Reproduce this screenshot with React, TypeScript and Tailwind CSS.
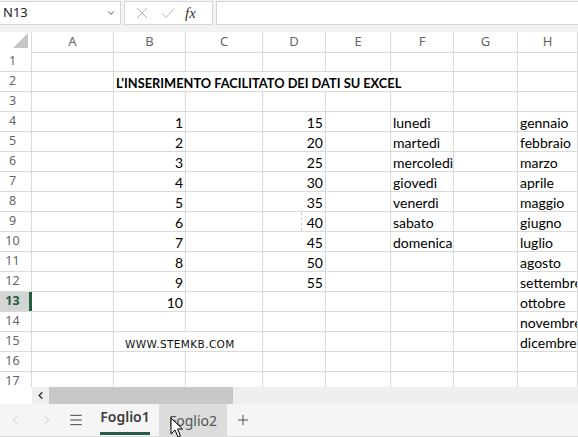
import { ChevronLeft, ChevronRight, Menu, Plus, ChevronDown } from "lucide-react";

const cols = ["A", "B", "C", "D", "E", "F", "G", "H"];

const days = ["lunedì", "martedì", "mercoledì", "giovedì", "venerdì", "sabato", "domenica"];
const months = [
  "gennaio",
  "febbraio",
  "marzo",
  "aprile",
  "maggio",
  "giugno",
  "luglio",
  "agosto",
  "settembre",
  "ottobre",
  "novembre",
  "dicembre",
];

const gridCols = "grid grid-cols-[32px_82px_72px_77px_63px_65px_63px_64px_minmax(0,1fr)]";
const line = "border-r border-b border-[#dadada]";
const headFont = "font-['Noto_Sans','Open_Sans',sans-serif]";

function Cell({
  children,
  className = "",
  text = "font-['Lato','Liberation_Sans',sans-serif] text-[14px] leading-[16px] text-black",
}: {
  children?: React.ReactNode;
  className?: string;
  text?: string;
}) {
  return (
    <div className={`${line} relative flex items-end overflow-hidden whitespace-nowrap ${text} ${className}`}>
      {children}
    </div>
  );
}

function Row({ n }: { n: number }) {
  const selected = n === 13;
  const b = n >= 4 && n <= 13 ? String(n - 3) : "";
  const d = n >= 4 && n <= 12 ? String(15 + (n - 4) * 5) : "";
  const f = n >= 4 && n <= 10 ? days[n - 4] : "";
  const h = n >= 4 && n <= 15 ? months[n - 4] : "";

  return (
    <div className={`${gridCols} h-[20px]`}>
      <div
        className={`${line} relative flex items-center justify-center pr-[6px] ${headFont} text-[12.5px] ${
          selected ? "bg-[#d4d4d4] font-bold text-[#1e5e3e]" : "bg-white text-[#666]"
        }`}
      >
        {n}
        {selected && <div className="absolute right-[-1px] top-0 h-full w-[3px] bg-[#21613f]" />}
      </div>
      <Cell />
      {n === 2 ? (
        <Cell
          className="col-span-5 pl-[2px]"
          text="font-['Lato','Liberation_Sans',sans-serif] text-[12.8px] leading-[16px] font-bold text-black"
        >
          L'INSERIMENTO FACILITATO DEI DATI SU EXCEL
        </Cell>
      ) : (
        <>
          {n === 15 ? (
            <Cell
              className="col-span-2 items-center pl-[11px] pt-[1px]"
              text="font-['DejaVu_Sans',sans-serif] text-[10.5px] leading-[14px] tracking-[0.4px] text-[#111]"
            >
              WWW.STEMKB.COM
            </Cell>
          ) : (
            <>
              <Cell className="justify-end pr-[2px]">{b}</Cell>
              <Cell />
            </>
          )}
          <Cell className="justify-end pr-[2px]">
            {n === 9 && (
              <div className="absolute left-[38px] top-0 h-full border-l border-dashed border-[#cfcfcf]" />
            )}
            {d}
          </Cell>
          <Cell />
          <Cell className="pl-[2px]">{f}</Cell>
        </>
      )}
      <Cell />
      <Cell className="pl-[2px]">{h}</Cell>
    </div>
  );
}

function Toolbar() {
  return (
    <div className="flex h-[32px] shrink-0 items-start gap-[3px] bg-[#f3f3f3] pt-[1px]">
      <div className="flex h-[24px] w-[121px] items-center justify-between border border-l-0 border-[#d6d6d6] bg-white pl-[3px] pr-[4px]">
        <span className="font-['Noto_Sans',sans-serif] text-[13px] text-[#222]">N13</span>
        <ChevronDown size={10} strokeWidth={2} className="text-[#333]" />
      </div>
      <div className="flex h-[24px] w-[89px] items-center border border-[#d6d6d6] bg-white">
        <svg width="12" height="12" viewBox="0 0 12 12" className="ml-[11px]">
          <path d="M1 1 L11 11 M11 1 L1 11" stroke="#b5b5b5" strokeWidth="1" fill="none" />
        </svg>
        <svg width="14" height="12" viewBox="0 0 14 12" className="ml-[13px]">
          <path d="M1 6.5 L5 10.5 L13 1.5" stroke="#b5b5b5" strokeWidth="1" fill="none" />
        </svg>
        <span className="ml-[10px] font-['Liberation_Serif',serif] text-[15px] italic leading-none text-[#333]">
          fx
        </span>
      </div>
      <div className="h-[24px] flex-1 border border-r-0 border-[#d6d6d6] bg-white" />
    </div>
  );
}

function Grid() {
  return (
    <div className="h-[355px] shrink-0 overflow-hidden">
      <div className={`${gridCols} h-[20px] bg-white`}>
        <div className={`${line} relative`}>
          <svg width="16" height="16" viewBox="0 0 16 16" className="absolute left-[13px] top-[1px]">
            <path d="M15 0 L15 15 L0 15 Z" fill="#c6c6c6" />
          </svg>
        </div>
        {cols.map((c) => (
          <div key={c} className={`${line} flex items-center justify-center ${headFont} text-[13px] text-[#666]`}>
            {c}
          </div>
        ))}
      </div>
      {Array.from({ length: 17 }, (_, i) => (
        <Row key={i} n={i + 1} />
      ))}
    </div>
  );
}

function Scrollbar() {
  return (
    <div className="flex h-[17px] shrink-0">
      <div className="w-[32px] bg-white" />
      <div className="flex flex-1 bg-[#efefef]">
        <div className="flex w-[17px] items-center justify-center">
          <ChevronLeft size={11} strokeWidth={3.2} className="text-[#333]" />
        </div>
        <div className="w-[184px] bg-[#c8c8c8]" />
      </div>
    </div>
  );
}

function Tabs() {
  return (
    <div className="relative flex h-[33px] shrink-0 items-stretch border-b border-[#dcdcdc] bg-[#f5f5f5] font-['Noto_Sans','Open_Sans',sans-serif]">
      <div className="flex w-[22px] items-center justify-end">
        <ChevronLeft size={14} strokeWidth={1.3} className="text-[#bdbdbd]" />
      </div>
      <div className="flex w-[32px] items-center justify-end">
        <ChevronRight size={14} strokeWidth={1.3} className="text-[#bdbdbd]" />
      </div>
      <div className="flex w-[30px] items-center justify-end">
        <Menu size={16} strokeWidth={1.5} className="text-[#444]" />
      </div>
      <div className="ml-[16px] flex w-[50px] flex-col items-center justify-center">
        <span className="mt-[2px] text-[14px] font-semibold text-[#3b3b3b]">Foglio1</span>
        <div className="mt-auto mb-[1px] h-[3px] w-[50px] bg-[#255e47]" />
      </div>
      <div className="ml-[9px] flex w-[68px] items-center justify-center bg-[#dcdcdc] text-[14px] text-[#555]">
        Foglio2
      </div>
      <div className="ml-[8px] flex items-center">
        <Plus size={16} strokeWidth={1.4} className="text-[#444]" />
      </div>
      <svg
        width="14"
        height="22"
        viewBox="0 0 14 22"
        className="absolute left-[170px] top-[13px]"
      >
        <path d="M1 1 L1 17 L5 13 L8 20 L10.5 19 L7.5 12 L12.5 12 Z" fill="white" stroke="black" strokeWidth="1" strokeLinejoin="round" />
      </svg>
    </div>
  );
}

export default function App() {
  return (
    <div className="flex h-[437px] w-full flex-col overflow-hidden bg-white">
      <Toolbar />
      <Grid />
      <Scrollbar />
      <Tabs />
    </div>
  );
}
